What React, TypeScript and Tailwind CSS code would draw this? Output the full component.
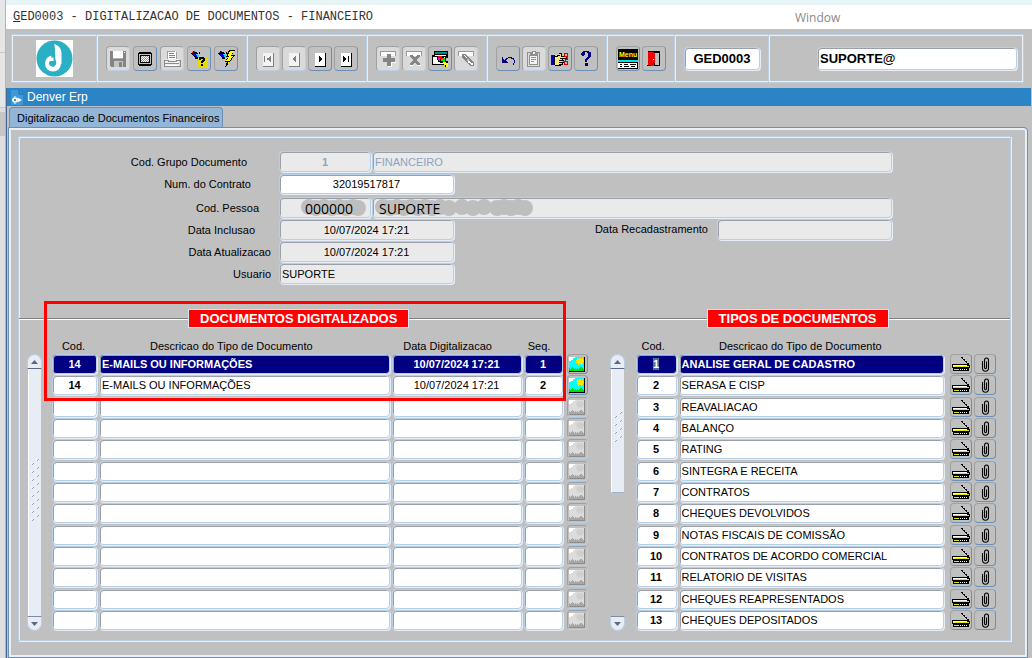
import React from "react";
import clsx from "clsx";

const tipos = [
  "ANALISE GERAL DE CADASTRO",
  "SERASA E CISP",
  "REAVALIACAO",
  "BALANÇO",
  "RATING",
  "SINTEGRA E RECEITA",
  "CONTRATOS",
  "CHEQUES DEVOLVIDOS",
  "NOTAS FISCAIS DE COMISSÃO",
  "CONTRATOS DE ACORDO COMERCIAL",
  "RELATORIO DE VISITAS",
  "CHEQUES REAPRESENTADOS",
  "CHEQUES DEPOSITADOS",
];

const digitalizados = [
  { cod: "14", descricao: "E-MAILS OU INFORMAÇÕES", data: "10/07/2024 17:21", seq: "1" },
  { cod: "14", descricao: "E-MAILS OU INFORMAÇÕES", data: "10/07/2024 17:21", seq: "2" },
];

const linhas = Array.from({ length: 13 }, (_, i) => digitalizados[i]);

const borda =
  "border border-[#b8cfe5] rounded-sm shadow-[inset_1px_1px_0_#9aa0aa,1px_1px_0_#e6edf6]";

/* ---------- Icones ---------- */

function Svg({ w = 18, h = 18, children }: { w?: number; h?: number; children: React.ReactNode }) {
  return (
    <svg width={w} height={h} viewBox={`0 0 ${w} ${h}`} shapeRendering="crispEdges" fill="none" aria-hidden="true">
      {children}
    </svg>
  );
}

const Logo = () => (
  <svg width="37" height="37" viewBox="0 0 37 37" aria-hidden="true">
    <rect width="37" height="37" fill="#fff" />
    <circle cx="18.5" cy="18.5" r="18" fill="#2aafc4" />
    <circle cx="17" cy="23.500" r="8" fill="#fff" />
    <path d="M18 4C22 5 25.500 8 25.500 13V24H19V11C19 8 18.800 6 18 4Z" fill="#fff" />
    <path d="M19.200 14V17.500C19.200 19.500 20.200 21 20.200 23A3.600 3.600 0 1 1 14.500 20.200C16 19 15.400 17 15.200 15Z" fill="#2aafc4" />
    <path d="M13 19.500A5 5 0 0 1 17.500 17.500V21H14Z" fill="#fff" />
  </svg>
);

const Salvar = () => (
  <Svg>
    <path d="M1 1H17V17H2L1 16Z" fill="#848484" />
    <path d="M4 1H14V8H4Z" fill="#fff" />
    <path d="M4 8H14V9H4Z" fill="#b0b0b0" />
    <path d="M5 11H14V17H5Z" fill="#c4c4c4" />
    <path d="M10 12H13V17H10Z" fill="#848484" />
    <path d="M15 2H16V3H15Z" fill="#fff" />
  </Svg>
);

const Tela = () => (
  <Svg>
    <path d="M3 2H15V3H16V15H15V16H3V15H2V3H3Z" fill="#000" />
    <path d="M3 4H15V14H3Z" fill="#c0c0c0" />
    <rect x="4.500" y="5.500" width="9" height="7" fill="#fff" stroke="#000" />
    {[6, 7, 8, 9, 10, 11].map((y) => (
      <path key={y} d={`M${5 + (y % 2)} ${y + 0.5}H13`} stroke="#00d5e8" strokeDasharray="1 1" />
    ))}
  </Svg>
);

const Imprimir = () => (
  <Svg>
    <path d="M5 1H13V10H5Z" fill="#fff" />
    <path d="M4 10V1H12M13 2V9" stroke="#a0a0a0" />
    <path d="M6 3.500H11M6 5.500H12M6 7.500H12" stroke="#858585" />
    <path d="M2 9H16V16H1V10Z" fill="#eee" />
    <path d="M1 10.500H5V11.500H13V10.500H17V16.500H1ZM2 13.500H16" stroke="#8c8c8c" />
    <path d="M12 12.500H15" stroke="#fff" />
    <path d="M4 15.500H14" stroke="#fff" />
  </Svg>
);

function Lanterna() {
  return (
    <>
      <path d="M1 3L3 1L8 3L9 6L6 9L3 6Z" fill="#000" />
      <path d="M2 2H3V3H2ZM4 1H5V2H4Z" fill="#f00" />
      <path d="M3 4H6V5H7V7H5V6H3Z" fill="#0000ff" />
      <path d="M6 4H8V5H9V7H7V5H6Z" fill="#00dfff" />
      <path d="M9 2H10V4H9ZM5 8H8V9H5Z" fill="#000" />
    </>
  );
}

const EntrarConsulta = () => (
  <Svg>
    <Lanterna />
    {[8, 10, 12, 14, 16].map((y) => (
      <path key={y} d={`M8 ${y + 0.5}H18M9 ${y + 1.5}H18`} stroke="#ece200" strokeDasharray="1 1" />
    ))}
    <path d="M9 7H14V8H15V11H14V12H13V13H11V11H12V10H13V9H11V10H9ZM11 14H13V16H11Z" fill="#000" />
  </Svg>
);

const ExecutarConsulta = () => (
  <Svg>
    <Lanterna />
    <path d="M12 0H18L15 5H18L8 18L10 12H8L11 7H9Z" fill="#000" />
    <path d="M13 1H17L13.500 6H16L10 15L12 10.500H9.500L12.500 6H10.500Z" fill="#ffff00" />
  </Svg>
);

function Navegar({ tipo, ativo = false }: { tipo: "primeiro" | "anterior" | "proximo" | "ultimo"; ativo?: boolean }) {
  const cor = ativo ? "#000" : "#808080";
  return (
    <Svg>
      <path d="M4 3H15V17H4Z" fill={cor} />
      <path d="M4 3H14V16H4Z" fill={ativo ? "#fff" : "#f3f3f3"} />
      {tipo === "primeiro" && <path d="M5 6H6V12H5ZM11 6H12V12H11V11H10V10H9V8H10V7H11ZM8 8H9V10H8Z" fill={cor} />}
      {tipo === "anterior" && <path d="M10 6H11V12H10V11H9V10H8V8H9V7H10Z" fill={cor} />}
      {tipo === "proximo" && <path d="M8 6H9V7H10V8H11V10H10V11H9V12H8Z" fill={cor} />}
      {tipo === "ultimo" && <path d="M6 6H7V7H8V8H9V10H8V11H7V12H6ZM11 6H12V12H11Z" fill={cor} />}
    </Svg>
  );
}

const Inserir = () => (
  <Svg>
    <path d="M1.500 5.500V1.500H16.500V5.500" fill="#fff" stroke="#999" />
    <path d="M8 4H12V8H16V12H12V16H8V12H4V8H8Z" fill="#858585" />
    <path d="M12 13H13V17H9V16H12ZM12 12H17V13H12Z" fill="#fff" />
  </Svg>
);

const Excluir = () => (
  <Svg>
    <path d="M1.500 5.500V1.500H16.500V5.500" fill="#fff" stroke="#999" />
    <path d="M5 5H8V6H9V7H11V6H12V5H15V7H14V8H13V9H12V11H13V12H14V13H15V15H12V14H11V13H9V14H8V15H5V13H6V12H7V11H8V9H7V8H6V7H5Z" fill="#858585" />
    <path d="M12 15H16V16H12ZM5 15H8V16H5Z" fill="#fff" />
  </Svg>
);

const LimparBloco = () => (
  <Svg>
    <path d="M3 1H17V8H15V15H1V5H3Z" fill="#000" />
    <path d="M4 2H16V4H4Z" fill="#008b8b" />
    <path d="M2 7H14V14H2Z" fill="#fff" />
    <path d="M4 5H15V6H4Z" fill="#fff" />
    <path d="M6 6H13V8H15V11H17V17H14V15H12V13H9V12H7V10H6Z" fill="#000" />
    <path d="M7 6H11V8H12V10H10V9H7Z" fill="#ff0000" />
    <path d="M7 8H9V11H8V10H7Z" fill="#ff00ff" />
    <path d="M10 9H12V8H14V12H12V11H10Z" fill="#00dd00" />
    <path d="M12 12H15V13H17V17H15V15H13V14H12Z" fill="#ffff00" />
  </Svg>
);

const Apagar = () => (
  <Svg>
    <path d="M1.500 5.500V1.500H16.500V5.500" fill="#fff" stroke="#999" />
    <path d="M5 4H8L17 13V16H13L5 8Z" fill="#858585" />
    <path d="M7 5H8V6H9V7H10V8H9V7H8V6H7ZM11 11H13V12H14V13H16V15H14V14H13V13H11Z" fill="#fff" />
    <path d="M10 9H12V11H10Z" fill="#c8c8c8" />
  </Svg>
);

const Desfazer = () => (
  <Svg>
    <path d="M3 7H4V9H5V10H6V9H7V8H9V7H13V8H15V10H16V13H15V15H14V13H15V10H14V9H12V8H9V9H8V10H7V11H8V12H9V13H3Z" fill="#000080" />
  </Svg>
);

const Prancheta = () => (
  <Svg>
    <rect x="2.500" y="2.500" width="12" height="14" rx="1" fill="#dedede" stroke="#8f8f8f" />
    <rect x="4.500" y="5.500" width="8" height="9" fill="#f4f4f4" stroke="#8f8f8f" />
    <path d="M5 4.500V3.500H7V1.500H10V3.500H12V4.500Z" fill="#fff" stroke="#8f8f8f" />
    <path d="M6 7.500H11M6 9.500H11M6 11.500H9" stroke="#8f8f8f" />
  </Svg>
);

const MaoTesoura = () => (
  <Svg w={20}>
    <path d="M1 5H4V15H1Z" fill="#0000d8" />
    <path d="M4 6H6V5H9V4H11V6H15V8H12V13H10V15H4Z" fill="#f4ea7a" />
    <path d="M4 5V15M5 6.500H7V5.500H10M9 3.500H11V6.500H16V8.500H10M9 10.500H13V12.500H9M12 8.500V11M9 14.500H12V12.500M5 15.500H11" stroke="#000" />
    <circle cx="16" cy="5" r="2" stroke="#e00000" />
    <circle cx="16" cy="13" r="2" stroke="#e00000" />
    <path d="M13 11.500H15V9.500H17V7" stroke="#e00000" />
  </Svg>
);

const Ajuda = () => (
  <Svg>
    <path d="M5 2H6V1H12V2H14V7H13V8H12V9H11V10H10V12H8V9H9V8H10V7H11V3H10V2H8V5H7V6H5V5H4V3H5ZM8 13H11V16H8Z" fill="#000080" />
  </Svg>
);

const Menu = () => (
  <svg width="20" height="20" viewBox="0 0 20 20" shapeRendering="crispEdges" aria-hidden="true">
    <rect width="20" height="10" fill="#000" />
    <text x="1" y="8" fontSize="7" fontWeight="700" fontFamily="Liberation Sans, sans-serif" fill="#ffff00">Menu</text>
    <rect y="10" width="20" height="10" fill="#000" />
    <rect y="11" width="20" height="2" fill="#00e5e5" />
    <rect y="14" width="19" height="5" fill="#fff" />
    <path d="M2 15.500H4M6 15.500H10M12 15.500H18M2 17.500H4M6 17.500H11M13 17.500H17" stroke="#000" />
  </svg>
);

const Sair = () => (
  <Svg>
    <path d="M3 1H15V16H3Z" fill="#000" />
    <path d="M10 3H14V15H10Z" fill="#c0c0c0" />
    <path d="M3 2H9V3H10V13H9V16H4V15H3Z" fill="#f00000" />
    <path d="M8 9H9V10H8Z" fill="#fff" />
    <path d="M2 15.500H6" stroke="#000" />
  </Svg>
);

function Imagem({ ativo }: { ativo: boolean }) {
  return (
    <Svg w={16} h={15}>
      <rect width="16" height="15" fill={ativo ? "#000" : "#8c8c8c"} />
      <rect width="15" height="14" fill={ativo ? "#00ffff" : "#dcdcdc"} />
      <path d="M0 0H6V1H4V3H2V4H0Z" fill="#fff" />
      <path d="M8 1H9V2H10V1H12V2H13V1H14V3H15V5H14V7H13V8H12V7H10V8H9V6H7V5H8V4H7V3H8Z" fill={ativo ? "#ffe600" : "#cfcfcf"} />
      <path d="M0 11H1V12H2V11H3V10H4V11H5V12H6V11H7V12H8V11H9V12H10V11H11V10H13V11H14V12H15V14H0Z" fill={ativo ? "#00e000" : "#a8a8a8"} />
    </Svg>
  );
}

const Scanner = () => (
  <Svg w={18} h={15}>
    <path d="M9 0H11V1H12V2H13V3H14V4H15V5H16V6H17V8H15V6H14V5H13V4H12V3H11V2H10V1H9Z" fill="#000" />
    <path d="M11 1H12V2H11ZM13 3H14V4H13ZM15 5H16V6H15Z" fill="#e6e600" />
    <path d="M0 7H15V8H18V11H17V14H1V11H0Z" fill="#000" />
    <path d="M1 8H15V9H1Z" fill="#fff" />
    <path d="M1 9H17V10H1Z" fill="#e6e600" />
    <path d="M2 12H7V13H2Z" fill="#e6e600" />
    <path d="M8 12.500H16" stroke="#fff" strokeDasharray="1 1" />
  </Svg>
);

const Clipe = () => (
  <svg width="9" height="15" viewBox="0 0 9 15" fill="none" stroke="#000" aria-hidden="true">
    <path d="M1.500 4V11A2.800 3 0 0 0 7.500 11V3.500A2 2.500 0 0 0 3.500 3.500V10.500A1 1.200 0 0 0 5.500 10.500V4.500" strokeWidth="1.100" />
  </svg>
);

/* ---------- Componentes ---------- */

function Botao({ titulo, ativo = true, children }: { titulo: string; ativo?: boolean; children: React.ReactNode }) {
  return (
    <button
      type="button"
      aria-label={titulo}
      disabled={!ativo}
      className={clsx(
        "flex h-[25px] w-6 shrink-0 items-center justify-center rounded-sm border border-t-[#a0a0a0] border-l-[#a0a0a0]",
        ativo ? "border-r-[#6b8fb5] border-b-[#6b8fb5]" : "border-r-[#b8cfe5] border-b-[#b8cfe5] bg-[#dadada]"
      )}
    >
      {children}
    </button>
  );
}

function BotaoLinha({ titulo, ativo = true, children }: { titulo: string; ativo?: boolean; children: React.ReactNode }) {
  return (
    <button
      type="button"
      aria-label={titulo}
      disabled={!ativo}
      className={clsx(
        "flex h-5 w-full items-center justify-center overflow-hidden rounded-sm border border-t-[#a0a0a0] border-l-[#a0a0a0]",
        ativo ? "border-r-[#6b8fb5] border-b-[#6b8fb5]" : "border-r-[#b8cfe5] border-b-[#b8cfe5]"
      )}
    >
      {children}
    </button>
  );
}

function Grupo({ children, className }: { children: React.ReactNode; className?: string }) {
  return (
    <div className={clsx("mr-px flex items-center gap-0.5 border-r border-[#b8cfe5] px-2 shadow-[1px_0_0_#e9f0f9]", className)}>
      {children}
    </div>
  );
}

function Linha({ rotulo, id, recuo, children, className }: { rotulo: string; id: string; recuo: string; children: React.ReactNode; className?: string }) {
  return (
    <div className={clsx("flex h-[21px] items-center", className)}>
      <label htmlFor={id} className={clsx("w-[260px] shrink-0 pt-0.5 text-right", recuo)}>
        {rotulo}
      </label>
      {children}
    </div>
  );
}

function Celula({ children, selecionada, negrito, centro }: { children?: React.ReactNode; selecionada?: boolean; negrito?: boolean; centro?: boolean }) {
  return (
    <div
      className={clsx(
        "mr-0.5 h-5 truncate px-0.5 pt-px leading-[17px]",
        borda,
        centro && "text-center",
        (negrito || selecionada) && "font-bold",
        selecionada ? "bg-[#000080] text-white" : "bg-white"
      )}
    >
      {children}
    </div>
  );
}

function Titulo({ children, inicio }: { children: React.ReactNode; inicio: string }) {
  return (
    <div className="flex items-center">
      <div className={clsx("h-0.5 border-t border-[#808080] bg-white", inicio)} />
      <h2 className="border border-[#d5e4f3] bg-[#ff0000] px-[11px] text-[13px] leading-[17px] font-bold whitespace-nowrap text-white">
        {children}
      </h2>
      <div className="h-0.5 flex-1 border-t border-[#808080] bg-white" />
    </div>
  );
}

function Seta({ baixo = false }: { baixo?: boolean }) {
  return (
    <button
      type="button"
      aria-label={baixo ? "Descer" : "Subir"}
      className={clsx(
        "flex h-[15px] w-[15px] items-center justify-center border border-[#b8cfe5] bg-[#e8ecf5]",
        baixo ? "rounded-b-full border-t-[#7c8ba5]" : "rounded-t-full border-b-[#5a6a85]"
      )}
    >
      <svg width="7" height="4" viewBox="0 0 7 4" aria-hidden="true">
        <path d={baixo ? "M0 0H7L3.500 4Z" : "M0 4H7L3.500 0Z"} fill="#5d6885" />
      </svg>
    </button>
  );
}

function Rolagem({ curta = false }: { curta?: boolean }) {
  const marcas = curta ? 4 : 8;
  return (
    <div className="mt-[26px] flex w-[15px] shrink-0 flex-col">
      <Seta />
      <div className="flex-1">
        <div
          className={clsx(
            "mx-px flex items-center justify-center border-l border-white bg-[#e8ecf5]",
            curta ? "h-1/2 border-b border-b-[#9fb4cc]" : "h-full"
          )}
        >
          <svg width="8" height={marcas * 8 + 4} aria-hidden="true" shapeRendering="crispEdges">
            {Array.from({ length: marcas }, (_, i) => (
              <g key={i} fill="#8fa3bd">
                <path d={`M7 ${i * 8}H8V${i * 8 + 1}H7V${i * 8 + 2}H6V${i * 8 + 1}H7Z`} />
                <path d={`M2 ${i * 8 + 4}H3V${i * 8 + 5}H2V${i * 8 + 6}H1V${i * 8 + 5}H2Z`} />
                <rect x="5" y={i * 8} width="1" height="1" fill="#fff" />
                <rect x="0" y={i * 8 + 4} width="1" height="1" fill="#fff" />
              </g>
            ))}
          </svg>
        </div>
      </div>
      <Seta baixo />
    </div>
  );
}

const campo = "h-[21px] bg-[#eaeaea] px-0.5 outline-none " + borda;
const linhaTabela = "h-[21px] nth-[3n+2]:h-[22px]";
const cabecalho = "h-[26px] align-bottom leading-4";

export default function App() {
  return (
    <div className="flex min-h-screen bg-[#c0c0c0] font-['Liberation_Sans',Arial,sans-serif] text-[11px] text-black">
      {/* Borda da janela de tras */}
      <div className="flex w-1.5 shrink-0 flex-col border-r border-[#b4b4b4] bg-[#dedede]">
        <div className="h-[53px] border-b border-[#c4c4c4] bg-[#e6e6e6]" />
        <div className="h-[55px] border-b border-[#c4c4c4] bg-[#e6e6e6]" />
        <div className="mt-1 h-6 bg-[#c6c6c6]" />
      </div>

      <div className="flex min-w-0 flex-1 flex-col">
        <div className="h-[5px] bg-[#e7f5f6]" />
        <header className="flex h-6 items-center bg-white pl-[7px]">
          <h1 className="w-[782px] font-['Liberation_Mono',monospace] text-[12px] text-[#333]">
            <span className="underline">G</span>ED0003 - DIGITALIZACAO DE DOCUMENTOS - FINANCEIRO
          </h1>
          <a href="#window" className="pt-0.5 font-['Open_Sans',sans-serif] text-[12px] text-[#8a8a8a]">
            Window
          </a>
        </header>

        {/* Barra de ferramentas */}
        <div className="mt-[5px] mr-2 ml-[5px] flex h-[49px] border border-[#b8cfe5] shadow-[inset_0_0_0_1px_#e9f0f9]">
          <Grupo className="w-[85px] justify-center">
            <Logo />
          </Grupo>
          <Grupo className="gap-[3px]">
            <Botao titulo="Salvar" ativo={false}><Salvar /></Botao>
            <Botao titulo="Tela"><Tela /></Botao>
            <Botao titulo="Imprimir" ativo={false}><Imprimir /></Botao>
            <Botao titulo="Entrar consulta"><EntrarConsulta /></Botao>
            <Botao titulo="Executar consulta"><ExecutarConsulta /></Botao>
          </Grupo>
          <Grupo>
            <Botao titulo="Primeiro" ativo={false}><Navegar tipo="primeiro" /></Botao>
            <Botao titulo="Anterior" ativo={false}><Navegar tipo="anterior" /></Botao>
            <Botao titulo="Proximo"><Navegar tipo="proximo" ativo /></Botao>
            <Botao titulo="Ultimo"><Navegar tipo="ultimo" ativo /></Botao>
          </Grupo>
          <Grupo>
            <Botao titulo="Inserir" ativo={false}><Inserir /></Botao>
            <Botao titulo="Excluir" ativo={false}><Excluir /></Botao>
            <Botao titulo="Limpar bloco"><LimparBloco /></Botao>
            <Botao titulo="Apagar" ativo={false}><Apagar /></Botao>
          </Grupo>
          <Grupo>
            <Botao titulo="Desfazer"><Desfazer /></Botao>
            <Botao titulo="Colar" ativo={false}><Prancheta /></Botao>
            <Botao titulo="Recortar"><MaoTesoura /></Botao>
            <Botao titulo="Ajuda"><Ajuda /></Botao>
          </Grupo>
          <Grupo>
            <Botao titulo="Menu"><Menu /></Botao>
            <Botao titulo="Sair"><Sair /></Botao>
          </Grupo>
          <Grupo>
            <input
              aria-label="Programa"
              defaultValue="GED0003"
              className={clsx("h-[23px] w-[76px] bg-white text-center text-[13px] font-bold outline-none", borda)}
            />
          </Grupo>
          <div className="flex flex-1 items-center justify-end pr-1.5">
            <input
              aria-label="Conexao"
              defaultValue="SUPORTE@"
              className={clsx("h-[23px] w-[200px] bg-white px-0.5 text-[13px] font-bold outline-none", borda)}
            />
          </div>
        </div>

        <div className="mt-[5px] mr-px flex flex-1 flex-col border-l border-[#46699a]">
          <div className="flex h-[18px] items-center gap-1 bg-[#2b84c6] pl-1 text-[12px] text-white">
            <svg width="12" height="15" viewBox="0 0 12 15" aria-hidden="true">
              <path d="M0 0H8L12 4V15H0Z" fill="#3d9ad6" />
              <path d="M8 0V4H12" fill="none" stroke="#1c69a6" />
              <circle cx="4" cy="10" r="2" fill="none" stroke="#fff" strokeWidth="1.500" />
              <path d="M1 10H2M4 7V6M4 13V14" stroke="#fff" />
              <path d="M6.500 7.500L11 10L6.500 12.500Z" fill="#fff" />
            </svg>
            Denver Erp
          </div>

          {/* Aba */}
          <div role="tablist" className="mt-px flex pl-0.5">
            <button
              type="button"
              role="tab"
              aria-selected="true"
              className="h-5 rounded-t border border-b-0 border-[#6b8fb5] bg-[#93b5d7] pt-0.5 pr-[3px] pl-[7px] whitespace-nowrap"
            >
              Digitalizacao de Documentos Financeiros
            </button>
          </div>

          <main className="mr-[3px] ml-px flex flex-1 flex-col rounded-tr border border-[#6b8fb5] px-[9px] pt-2 pr-4 pb-4 shadow-[inset_0_0_0_2px_#e9eff7]">
            <div className="flex-1 border border-[#b8cfe5] shadow-[inset_1px_1px_0_#e9f0f9,1px_1px_0_#e9f0f9]">
              <form className="flex flex-col gap-px pt-[14px] pr-[118px]">
                <Linha rotulo="Cod. Grupo Documento" id="grupo" recuo="pr-8">
                  <input id="grupo" readOnly defaultValue="1" className={clsx(campo, "w-[92px] text-center font-bold text-[#8ca4c4]")} />
                  <input aria-label="Nome do grupo" readOnly defaultValue="FINANCEIRO" className={clsx(campo, "ml-px min-w-0 flex-1 text-[#8ca4c4]")} />
                </Linha>
                <Linha rotulo="Num. do Contrato" id="contrato" recuo="pr-7">
                  <input id="contrato" defaultValue="32019517817" className={clsx("h-5 w-[175px] bg-white text-center outline-none", borda)} />
                </Linha>
                <Linha rotulo="Cod. Pessoa" id="pessoa" recuo="pr-5" className="mt-0.5">
                  <div className={clsx(campo, "relative w-[92px]")}>
                    <svg className="absolute top-0 left-5" width="68" height="19" aria-hidden="true" fill="#bebebe">
                      {[9, 16, 24, 32, 39, 46, 53, 58].map((x, i) => (
                        <circle key={x} cx={x} cy={9 + (i % 2)} r="8" />
                      ))}
                    </svg>
                    <input
                      id="pessoa"
                      readOnly
                      defaultValue="000000"
                      className="relative h-[19px] w-full pt-0.5 pl-2 text-center font-['Open_Sans',sans-serif] text-[14px] outline-none"
                    />
                  </div>
                  <div className={clsx(campo, "relative ml-px min-w-0 flex-1")}>
                    <svg className="absolute top-0 left-0" width="164" height="19" aria-hidden="true" fill="#bebebe">
                      {[10, 17, 24, 31, 38, 45, 52, 59, 67, 76, 89, 100, 111, 124, 131, 138, 145, 152].map((x, i) => (
                        <circle key={x} cx={x} cy={9 + (i % 2)} r="8" />
                      ))}
                    </svg>
                    <input
                      aria-label="Nome da pessoa"
                      readOnly
                      defaultValue="SUPORTE"
                      className="relative h-[19px] w-full pt-0.5 pl-1 font-['Open_Sans',sans-serif] text-[14px] outline-none"
                    />
                  </div>
                </Linha>
                <Linha rotulo="Data Inclusao" id="inclusao" recuo="pr-6">
                  <input id="inclusao" readOnly defaultValue="10/07/2024 17:21" className={clsx(campo, "w-[175px] text-center")} />
                  <label htmlFor="recadastramento" className="mr-[9px] ml-auto">
                    Data Recadastramento
                  </label>
                  <input id="recadastramento" readOnly className={clsx(campo, "w-[175px]")} />
                </Linha>
                <Linha rotulo="Data Atualizacao" id="atualizacao" recuo="pr-2">
                  <input id="atualizacao" readOnly defaultValue="10/07/2024 17:21" className={clsx(campo, "w-[175px] text-center")} />
                </Linha>
                <Linha rotulo="Usuario" id="usuario" recuo="pr-2">
                  <input id="usuario" readOnly defaultValue="SUPORTE" className={clsx(campo, "w-[175px]")} />
                </Linha>
              </form>

              <div className="mt-[25px] grid grid-cols-[58fr_41fr]">
                {/* Documentos digitalizados */}
                <section className="relative">
                  <Titulo inicio="w-[169px]">DOCUMENTOS DIGITALIZADOS</Titulo>
                  <div className="flex gap-[10px] pr-3 pl-2">
                    <Rolagem />
                    <table className="w-full table-fixed border-separate border-spacing-0">
                      <colgroup>
                        <col className="w-[47px]" />
                        <col />
                        <col className="w-[132px]" />
                        <col className="w-[43px]" />
                        <col className="w-[21px]" />
                      </colgroup>
                      <thead>
                        <tr className={cabecalho}>
                          <th className="p-0 pr-1 font-normal">Cod.</th>
                          <th className="p-0 pr-7 font-normal">Descricao do Tipo de Documento</th>
                          <th className="p-0 pr-5 font-normal">Data Digitalizacao</th>
                          <th className="p-0 pr-3 font-normal">Seq.</th>
                          <td />
                        </tr>
                      </thead>
                      <tbody className="align-top">
                        {linhas.map((doc, i) => (
                          <tr key={i} className={linhaTabela}>
                            <td className="p-0"><Celula selecionada={i === 0} negrito centro>{doc?.cod}</Celula></td>
                            <td className="p-0"><Celula selecionada={i === 0}>{doc?.descricao}</Celula></td>
                            <td className="p-0"><Celula selecionada={i === 0} centro>{doc?.data}</Celula></td>
                            <td className="p-0 pr-0.5"><Celula selecionada={i === 0} negrito centro>{doc?.seq}</Celula></td>
                            <td className="p-0">
                              <BotaoLinha titulo="Ver imagem" ativo={!!doc}>
                                <Imagem ativo={!!doc} />
                              </BotaoLinha>
                            </td>
                          </tr>
                        ))}
                      </tbody>
                    </table>
                  </div>
                  {/* Destaque */}
                  <div className="pointer-events-none absolute -top-2 right-[34px] left-[25px] h-[100px] border-3 border-[#ff0000]" />
                </section>

                {/* Tipos de documentos */}
                <section>
                  <Titulo inicio="w-[107px]">TIPOS DE DOCUMENTOS</Titulo>
                  <div className="flex gap-[11px] pr-[14px] pl-[10px]">
                    <Rolagem curta />
                    <table className="w-full table-fixed border-separate border-spacing-0">
                      <colgroup>
                        <col className="w-[43px]" />
                        <col />
                        <col className="w-[24px]" />
                        <col className="w-[22px]" />
                      </colgroup>
                      <thead>
                        <tr className={cabecalho}>
                          <th className="p-0 pr-2 font-normal">Cod.</th>
                          <th className="p-0 pr-7 font-normal">Descricao do Tipo de Documento</th>
                          <td />
                          <td />
                        </tr>
                      </thead>
                      <tbody className="align-top">
                        {tipos.map((tipo, i) => (
                          <tr key={tipo} className={linhaTabela}>
                            <td className="p-0">
                              <Celula selecionada={i === 0} negrito centro>
                                <span className={clsx(i === 0 && "bg-[#4f6e96]")}>{i + 1}</span>
                              </Celula>
                            </td>
                            <td className="p-0 pr-1"><Celula selecionada={i === 0}>{tipo}</Celula></td>
                            <td className="p-0 pr-0.5">
                              <BotaoLinha titulo="Digitalizar"><Scanner /></BotaoLinha>
                            </td>
                            <td className="p-0">
                              <BotaoLinha titulo="Anexar"><Clipe /></BotaoLinha>
                            </td>
                          </tr>
                        ))}
                      </tbody>
                    </table>
                  </div>
                </section>
              </div>
            </div>
          </main>
        </div>
      </div>
    </div>
  );
}
